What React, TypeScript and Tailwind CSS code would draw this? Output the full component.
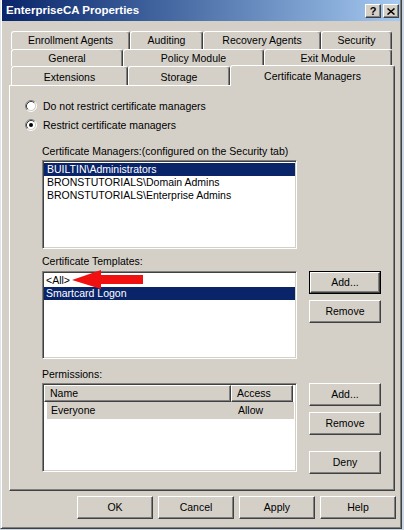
import React from "react";

const raised =
  "bg-[#d4d0c8] border border-t-white border-l-white border-r-[#404040] border-b-[#404040] shadow-[inset_-1px_-1px_#808080]";
const sunken =
  "bg-white border border-t-[#808080] border-l-[#808080] border-r-white border-b-white shadow-[inset_1px_1px_#404040,inset_-1px_-1px_#d4d0c8]";
const tabCls =
  "flex items-center justify-center bg-[#d4d0c8] border-t border-l border-r border-t-white border-l-white border-r-[#404040] shadow-[inset_-1px_0_#808080] rounded-t-[3px] whitespace-nowrap";

function Radio({ checked }: { checked?: boolean }) {
  return (
    <svg width="12" height="12" viewBox="0 0 12 12" className="shrink-0">
      <circle cx="6" cy="6" r="4.5" fill="white" />
      <path d="M2.11 9.89 A5.5 5.5 0 0 1 9.89 2.11" stroke="#808080" strokeWidth="1" fill="none" />
      <path d="M9.89 2.11 A5.5 5.5 0 0 1 2.11 9.89" stroke="#ffffff" strokeWidth="1" fill="none" />
      <path d="M2.82 9.18 A4.5 4.5 0 0 1 9.18 2.82" stroke="#404040" strokeWidth="1" fill="none" />
      <path d="M9.18 2.82 A4.5 4.5 0 0 1 2.82 9.18" stroke="#d4d0c8" strokeWidth="1" fill="none" />
      {checked && <circle cx="6" cy="6" r="2" fill="black" />}
    </svg>
  );
}

function Btn({ label, cls }: { label: string; cls: string }) {
  return <div className={`${raised} ${cls} flex items-center justify-center`}>{label}</div>;
}

export default function App() {
  return (
    <div className="w-[404px] h-[530px] bg-[#c9d6e3] font-['Liberation_Sans',Arial,sans-serif] text-[10.5px] leading-[13px] text-black">
      <div className="w-[402px] h-[529px] bg-[#d4d0c8] border-l border-l-[#dfe4ea] border-r border-r-[#404040] border-b border-b-[#404040] shadow-[inset_1px_0_white,inset_-1px_-1px_#808080] flex flex-col px-px">
        {/* Title bar */}
        <div className="h-[21px] flex items-start justify-between pl-[4px] pr-px bg-linear-to-r from-[#0a246a] to-[#a6caf0]">
          <div className="text-white font-bold text-[11.5px] leading-[21px]">EnterpriseCA Properties</div>
          <div className="flex gap-[2px] pt-[4px]">
            <div className={`${raised} w-[16px] h-[14px] flex items-center justify-center font-bold text-[11px] leading-none`}>?</div>
            <div className={`${raised} w-[16px] h-[14px] flex items-center justify-center`}>
              <svg width="8" height="7" viewBox="0 0 8 7">
                <path d="M0.5 0.5 L7.5 6.5 M7.5 0.5 L0.5 6.5" stroke="black" strokeWidth="1.5" />
              </svg>
            </div>
          </div>
        </div>

        {/* Tabs */}
        <div className="mt-[10px] ml-[9px] flex flex-col">
          <div className="flex h-[18px]">
            <div className={`${tabCls} w-[119px]`}>Enrollment Agents</div>
            <div className={`${tabCls} w-[73px]`}>Auditing</div>
            <div className={`${tabCls} w-[118px]`}>Recovery Agents</div>
            <div className={`${tabCls} w-[71px]`}>Security</div>
          </div>
          <div className="flex h-[17px]">
            <div className={`${tabCls} w-[112px]`}>General</div>
            <div className={`${tabCls} w-[141px]`}>Policy Module</div>
            <div className={`${tabCls} w-[128px]`}>Exit Module</div>
          </div>
          <div className="flex h-[19px] items-start">
            <div className={`${tabCls} w-[117px] h-[19px] pt-[2px]`}>Extensions</div>
            <div className={`${tabCls} w-[102px] h-[19px] pt-[2px]`}>Storage</div>
            <div className={`${tabCls} w-[165px] h-[21px] relative -top-px z-10`}>Certificate Managers</div>
          </div>
        </div>

        {/* Panel */}
        <div className="ml-[7px] w-[386px] h-[406px] shrink-0 border-t border-l border-t-white border-l-white border-r border-b border-r-[#404040] border-b-[#404040] shadow-[inset_-1px_-1px_#808080] flex flex-col">
          <div className="ml-[15px] mt-[14px] h-[12px] flex items-center gap-[6px]">
            <Radio />
            <span>Do not restrict certificate managers</span>
          </div>
          <div className="ml-[15px] mt-[7px] h-[12px] flex items-center gap-[6px]">
            <Radio checked />
            <span>Restrict certificate managers</span>
          </div>

          <div className="ml-[32px] mt-[14px] h-[13px]">Certificate Managers:(configured on the Security tab)</div>
          <div className={`ml-[32px] mt-[2px] w-[255px] h-[89px] ${sunken} p-px pt-[2px] flex flex-col`}>
            <div className="h-[13px] pl-[3px] bg-[#0a246a] text-white">BUILTIN\Administrators</div>
            <div className="h-[13px] pl-[3px]">BRONSTUTORIALS\Domain Admins</div>
            <div className="h-[13px] pl-[3px]">BRONSTUTORIALS\Enterprise Admins</div>
          </div>

          <div className="ml-[32px] mt-[6px] h-[13px]">Certificate Templates:</div>
          <div className="ml-[32px] mt-[3px] flex gap-[12px]">
            <div className={`relative w-[255px] h-[88px] ${sunken} p-px pt-[2px] flex flex-col`}>
              <div className="h-[13px] pl-[2px]">&lt;All&gt;</div>
              <div className="h-[13px] pl-[2px] bg-[#0a246a] text-white">Smartcard Logon</div>
              <svg className="absolute left-[29px] top-[-2px]" width="72" height="21" viewBox="0 0 72 21">
                <polygon points="0,10 29,0 29,5 71,5 71,14 29,14 29,19" fill="#f01010" />
              </svg>
            </div>
            <div className="flex flex-col gap-[6px]">
              <div className="w-[72px] h-[23px] border border-black">
                <Btn label="Add..." cls="w-full h-full" />
              </div>
              <Btn label="Remove" cls="w-[72px] h-[23px]" />
            </div>
          </div>

          <div className="ml-[32px] mt-[9px] h-[13px]">Permissions:</div>
          <div className="ml-[32px] mt-[2px] flex gap-[12px]">
            <div className={`w-[255px] h-[89px] ${sunken} p-px flex flex-col`}>
              <div className="flex h-[17px]">
                <div className="w-[187px] h-full pl-[5px] flex items-center bg-[#d4d0c8] border border-t-white border-l-white border-r-[#404040] border-b-[#404040] shadow-[inset_-1px_-1px_#808080]">Name</div>
                <div className="w-[62px] h-full pl-[5px] flex items-center bg-[#d4d0c8] border border-t-white border-l-white border-r-[#404040] border-b-[#404040] shadow-[inset_-1px_-1px_#808080]">Access</div>
              </div>
              <div className="ml-[3px] w-[247px] h-[17px] flex items-center bg-[#d4d0c8]">
                <div className="w-[184px] pl-[4px]">Everyone</div>
                <div className="pl-[7px]">Allow</div>
              </div>
            </div>
            <div className="flex flex-col">
              <Btn label="Add..." cls="w-[72px] h-[23px]" />
              <Btn label="Remove" cls="w-[72px] h-[23px] mt-[6px]" />
              <Btn label="Deny" cls="w-[72px] h-[23px] mt-[16px]" />
            </div>
          </div>
        </div>

        {/* Bottom buttons */}
        <div className="mt-[5px] ml-[75px] flex gap-[5px]">
          <Btn label="OK" cls="w-[76px] h-[23px]" />
          <Btn label="Cancel" cls="w-[76px] h-[23px]" />
          <Btn label="Apply" cls="w-[76px] h-[23px]" />
          <Btn label="Help" cls="w-[76px] h-[23px]" />
        </div>
      </div>
    </div>
  );
}
